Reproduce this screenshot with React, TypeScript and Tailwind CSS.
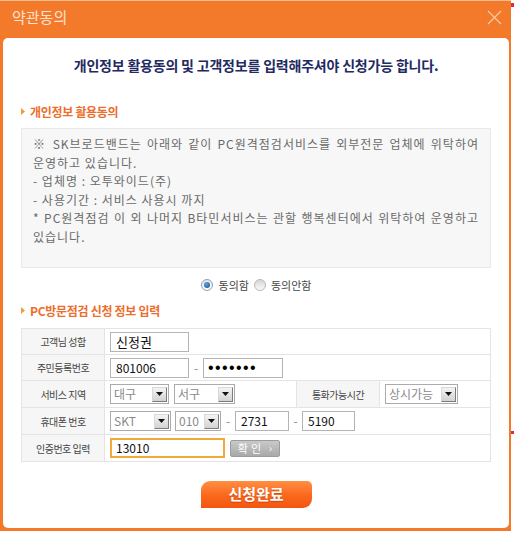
import { type FC, type ReactNode } from 'react';

const Arrow: FC = () => (
  <svg width="4" height="7" viewBox="0 0 4 7" className="shrink-0">
    <path d="M0 0 L4 3.5 L0 7 Z" fill="#f39a3a" />
  </svg>
);

const SectionTitle: FC<{ children: ReactNode; className?: string }> = ({ children, className }) => (
  <div className={`flex items-center gap-[5px] pl-[18px] h-[17px] ${className ?? ''}`}>
    <Arrow />
    <span className="text-[12px] font-bold text-[#ec6e2c] leading-[17px] tracking-[-0.3px]">{children}</span>
  </div>
);

const Label: FC<{ children: ReactNode; className?: string }> = ({ children, className }) => (
  <div
    className={`flex items-center justify-center bg-[#f6f6f6] text-[10px] tracking-[-0.5px] text-[#444] ${className ?? 'w-[83px] border-r border-[#e4e4e4]'}`}
  >
    {children}
  </div>
);

const TextBox: FC<{ w: string; value: string; focus?: boolean; className?: string }> = ({ w, value, focus, className }) => (
  <div
    className={`${w} h-[20px] bg-white flex items-center text-[12px] text-[#111] ${
      focus ? 'border-2 border-[#f2a93b] pl-[4px]' : 'border border-[#b4b4b4] pl-[5px]'
    } ${className ?? ''}`}
  >
    {value}
  </div>
);

const DropBtn: FC = () => (
  <div className="w-[15px] h-[15px] border border-t-[#d8d8d8] border-l-[#d8d8d8] border-r-[#7c7c7c] border-b-[#7c7c7c] bg-linear-to-b from-[#f4f4f4] to-[#d2d2d2] flex items-center justify-center">
    <svg width="7" height="4" viewBox="0 0 7 4">
      <path d="M0 0 H7 L3.5 4 Z" fill="#111" />
    </svg>
  </div>
);

const SelectBox: FC<{ w: string; value: string; className?: string }> = ({ w, value, className }) => (
  <div
    className={`${w} h-[20px] bg-white border border-[#ababab] flex items-center justify-between pl-[3px] pr-[1px] text-[12px] text-[#8a8a8a] ${className ?? ''}`}
  >
    <span>{value}</span>
    <DropBtn />
  </div>
);

const Dash: FC<{ w: string }> = ({ w }) => (
  <span className={`${w} text-center text-[12px] text-[#888]`}>-</span>
);

const Radio: FC<{ checked?: boolean; className?: string }> = ({ checked, className }) =>
  checked ? (
    <span className={`shrink-0 w-[12px] h-[12px] rounded-full border border-[#8fa0b4] bg-linear-to-b from-[#e6e6e6] to-white flex items-center justify-center ${className ?? ''}`}>
      <span className="w-[6px] h-[6px] rounded-full bg-[radial-gradient(circle_at_40%_35%,#5ba4e6,#12508f)]" />
    </span>
  ) : (
    <span className={`shrink-0 block w-[12px] h-[12px] rounded-full border border-[#b9b9b9] bg-linear-to-b from-[#d6d6d6] to-[#fafafa] ${className ?? ''}`} />
  );

const InfoTable: FC = () => (
  <div className="mx-[18px] border border-[#e4e4e4] flex flex-col">
    <div className="h-[25px] flex">
      <Label>고객님 성함</Label>
      <div className="flex items-center pl-[5px]">
        <TextBox w="w-[79px]" value="신정권" className="text-[13px]" />
      </div>
    </div>
    <div className="h-[26px] flex border-t border-[#e4e4e4]">
      <Label>주민등록번호</Label>
      <div className="flex items-center pl-[5px]">
        <TextBox w="w-[79px]" value="801006" />
        <Dash w="w-[14px]" />
        <div className="w-[80px] h-[20px] border border-[#b4b4b4] bg-white flex items-center pl-[4px] font-['Liberation_Sans',sans-serif] text-[16px] tracking-[1.4px] text-black">
          •••••••
        </div>
      </div>
    </div>
    <div className="h-[27px] flex border-t border-[#e4e4e4]">
      <Label>서비스 지역</Label>
      <div className="w-[191px] flex items-center pl-[5px]">
        <SelectBox w="w-[59px]" value="대구" />
        <SelectBox w="w-[61px]" value="서구" className="ml-[5px]" />
      </div>
      <Label className="w-[84px] border-l border-r border-[#e4e4e4]">통화가능시간</Label>
      <div className="flex items-center pl-[5px]">
        <SelectBox w="w-[73px]" value="상시가능" />
      </div>
    </div>
    <div className="h-[27px] flex border-t border-[#e4e4e4]">
      <Label>휴대폰 번호</Label>
      <div className="flex items-center pl-[5px]">
        <SelectBox w="w-[61px]" value="SKT" />
        <SelectBox w="w-[46px]" value="010" className="ml-[4px]" />
        <Dash w="w-[14px]" />
        <TextBox w="w-[54px]" value="2731" />
        <Dash w="w-[13px]" />
        <TextBox w="w-[53px]" value="5190" />
      </div>
    </div>
    <div className="h-[27px] flex border-t border-[#e4e4e4]">
      <Label>인증번호 입력</Label>
      <div className="flex items-center pl-[5px]">
        <TextBox w="w-[115px]" value="13010" focus />
        <button className="ml-[5px] w-[50px] h-[17px] rounded-[2px] border border-[#9c9c9c] bg-linear-to-b from-[#c9c9c9] to-[#a9a9a9] flex items-center justify-center gap-[5px] text-[11px] text-white leading-none">
          <span className="tracking-[3px]">확인</span>
          <span className="text-[10px]">›</span>
        </button>
      </div>
    </div>
  </div>
);

const App: FC = () => {
  return (
    <div className="w-[514px] h-[533px] bg-white flex font-['Noto_Sans_CJK_KR',sans-serif]">
      <div className="w-[511px] h-[531px] bg-[#f37a2b] border-t border-[#f9bb90] flex flex-col">
        <div className="h-[37px] flex items-start justify-between pl-[12px] pr-[9px] pt-[6px]">
          <h1 className="text-[15px] leading-[20px] text-[#fde2cf]">약관동의</h1>
          <svg width="15" height="15" viewBox="0 0 15 15" className="mt-[3px]">
            <path d="M1 1 L14 14 M14 1 L1 14" stroke="#fbc7a6" strokeWidth="1.2" />
          </svg>
        </div>

        <div className="ml-[3px] w-[506px] h-[490px] bg-white rounded-[5px] flex flex-col pt-[17px]">
          <p className="h-[20px] text-center text-[14px] font-bold leading-[20px] tracking-[-0.2px] text-[#232a62]">
            개인정보 활용동의 및 고객정보를 입력해주셔야 신청가능 합니다.
          </p>

          <SectionTitle className="mt-[28px]">개인정보 활용동의</SectionTitle>

          <div className="mx-[18px] mt-[8px] h-[140px] bg-[#f7f7f7] border border-[#e9e9e9] px-[11px] pt-[6px] text-[12px] leading-[18.5px] tracking-[1px] text-[#6a6a6a] break-keep">
            <p className="text-justify">
              ※ SK브로드밴드는 아래와 같이 PC원격점검서비스를 외부전문 업체에 위탁하여 운영하고 있습니다.
            </p>
            <p>- 업체명 : 오투와이드(주)</p>
            <p>- 사용기간 : 서비스 사용시 까지</p>
            <p className="text-justify">
              * PC원격점검 이 외 나머지 B타민서비스는 관할 행복센터에서 위탁하여 운영하고 있습니다.
            </p>
          </div>

          <div className="mt-[7px] h-[20px] flex items-center justify-center text-[11px] text-[#444]">
            <Radio checked />
            <span className="ml-[6px]">동의함</span>
            <Radio className="ml-[5px]" />
            <span className="ml-[5px]">동의안함</span>
          </div>

          <SectionTitle className="mt-[7px]">PC방문점검 신청 정보 입력</SectionTitle>

          <div className="mt-[9px]">
            <InfoTable />
          </div>

          <button className="mx-auto mt-[19px] w-[111px] h-[27px] rounded-tl-[9px] rounded-tr-[5px] rounded-br-[9px] bg-linear-to-b from-[#ff8e42] via-[#fb6a1e] to-[#f2540f] text-[15px] font-bold text-white [text-shadow:0_1px_1px_rgba(160,50,0,0.5)]">
            신청완료
          </button>
        </div>
      </div>

      <div className="w-[3px] flex flex-col">
        <div className="h-[3px]" />
        <div className="h-[4px] bg-[#d9322a]" />
        <div className="h-[424px]" />
        <div className="h-[3px] bg-[#d9322a]" />
      </div>
    </div>
  );
};

export default App;
